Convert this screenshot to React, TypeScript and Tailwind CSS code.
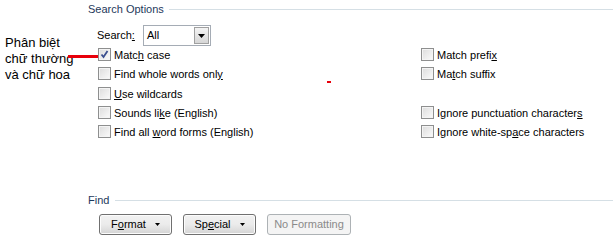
import React from 'react';

const ui = "font-['Tahoma','Liberation_Sans',Arial,sans-serif] text-[11px] leading-[13px] text-black";

function Key({ children }: { children: React.ReactNode }) {
  return <span className="underline underline-offset-[1px]">{children}</span>;
}

function Check({ checked }: { checked?: boolean }) {
  return (
    <span className="flex h-[13px] w-[13px] shrink-0 items-center justify-center border border-[#8e8f8f] bg-gradient-to-br from-[#dcdcdc] to-[#fbfbfb] shadow-[inset_0_0_0_1px_#f4f4f4]">
      {checked && (
        <svg width="9" height="9" viewBox="0 0 9 9">
          <path d="M1.5 4.5 L3.5 7 L7.5 1" fill="none" stroke="#3b4f8f" strokeWidth="1.8" />
        </svg>
      )}
    </span>
  );
}

function Option({ label, checked }: { label: React.ReactNode; checked?: boolean }) {
  return (
    <div className="flex h-[19.25px] items-start gap-[3px]">
      <Check checked={checked} />
      <span className="pt-[1px]">{label}</span>
    </div>
  );
}

function Button({ children, disabled }: { children: React.ReactNode; disabled?: boolean }) {
  if (disabled) {
    return (
      <div className="flex h-[21px] w-[84px] items-center justify-center rounded-[3px] border border-[#adb2b5] bg-[#f4f4f4] text-[#8a8a8a]">
        {children}
      </div>
    );
  }
  return (
    <div className="flex h-[21px] w-[73px] items-center justify-center gap-[9px] rounded-[3px] border border-[#707070] bg-gradient-to-b from-[#f2f2f2] via-[#ebebeb] to-[#d4d4d4] shadow-[inset_0_0_0_1px_#fcfcfc]">
      <span>{children}</span>
      <svg width="5" height="3" viewBox="0 0 5 3"><path d="M0 0h5L2.5 3z" fill="#000" /></svg>
    </div>
  );
}

export default function App() {
  return (
    <div className={`relative flex h-[240px] w-[616px] overflow-hidden bg-white ${ui}`}>
      {/* annotation */}
      <div className="w-[88px] shrink-0 pl-[5px] pt-[35px] font-['Liberation_Sans',Arial,sans-serif] text-[13px] leading-[16px]">
        <p>Phân biệt</p>
        <p>chữ thường</p>
        <p>và chữ hoa</p>
      </div>
      <div className="absolute left-[68px] top-[55px] h-[3px] w-[30px] bg-[#e8000b]" />
      <div className="absolute left-[327px] top-[81px] h-[2px] w-[4px] bg-[#e8000b]" />

      <div className="flex flex-1 flex-col pr-[3px] pt-[3px]">
        <div className="flex items-center gap-[5px] text-[#1e395b]">
          <span>Search Options</span>
          <div className="h-px flex-1 bg-[#d5dfe5]" />
        </div>

        <div className="mt-[9px] flex items-center gap-[8px] pl-[9px]">
          <span>Search<Key>:</Key></span>
          <div className="flex h-[21px] w-[68px] items-center border border-[#a5acb5] bg-white">
            <span className="flex-1 pl-[3px]">All</span>
            <div className="m-[1px] flex h-[17px] w-[15px] items-center justify-center border border-[#a0a0a0] bg-gradient-to-b from-[#f4f4f4] to-[#d6d6d6]">
              <svg width="7" height="4" viewBox="0 0 7 4"><path d="M0 0h7L3.5 4z" fill="#000" /></svg>
            </div>
          </div>
        </div>

        <div className="mt-[2px] flex pl-[10px]">
          <div className="flex w-[323px] flex-col">
            <Option checked label={<>Matc<Key>h</Key> case</>} />
            <Option label={<>Find whole words onl<Key>y</Key></>} />
            <Option label={<><Key>U</Key>se wildcards</>} />
            <Option label={<>Sounds li<Key>k</Key>e (English)</>} />
            <Option label={<>Find all <Key>w</Key>ord forms (English)</>} />
          </div>
          <div className="flex flex-col">
            <Option label={<>Match prefi<Key>x</Key></>} />
            <Option label={<>Ma<Key>t</Key>ch suffix</>} />
            <div className="h-[19.25px]" />
            <Option label={<>Ignore punctuation character<Key>s</Key></>} />
            <Option label={<>Ignore white-sp<Key>a</Key>ce characters</>} />
          </div>
        </div>

        <div className="mt-[50px] flex items-center gap-[6px] text-[#1e395b]">
          <span>Find</span>
          <div className="h-px flex-1 bg-[#d5dfe5]" />
        </div>

        <div className="mt-[7px] flex gap-[11px] pl-[11px]">
          <Button>F<Key>o</Key>rmat</Button>
          <Button>Sp<Key>e</Key>cial</Button>
          <Button disabled>No Formatting</Button>
        </div>
      </div>
    </div>
  );
}
